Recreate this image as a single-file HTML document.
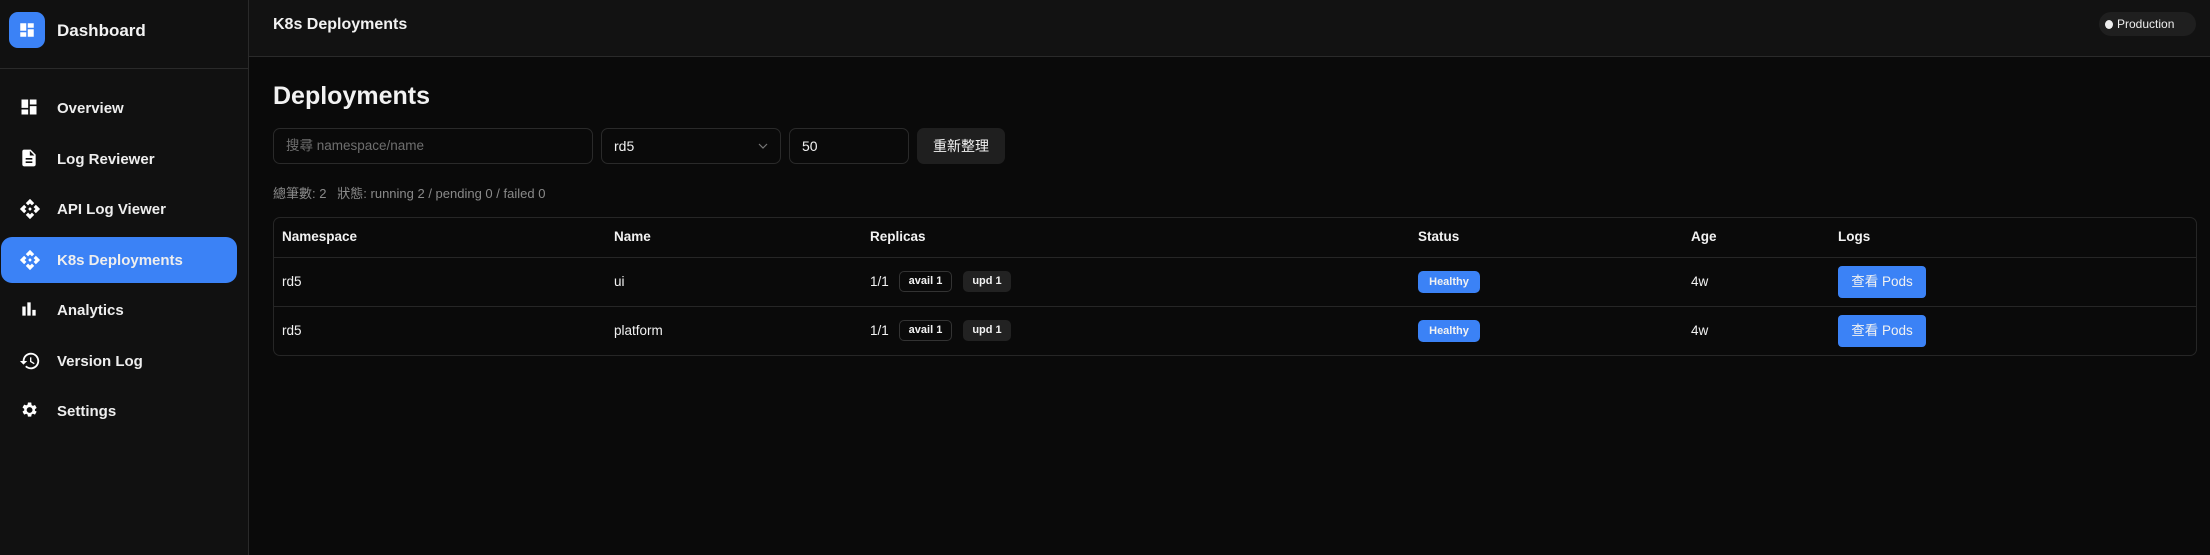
<!DOCTYPE html>
<html><head><meta charset="utf-8"><style>
*{box-sizing:border-box;margin:0;padding:0}
body{width:2210px;height:555px;background:#0a0a0a;font-family:"Liberation Sans","Noto Sans CJK TC",sans-serif;color:#f2f2f2;position:relative;overflow:hidden}
.a{position:absolute;white-space:nowrap}
#sb{position:absolute;left:0;top:0;width:249px;height:555px;background:#111;border-right:1px solid #2a2a2a}
#top{position:absolute;left:249px;top:0;right:0;height:57px;background:#121212;border-bottom:1px solid #2a2a2a}
.nav{position:absolute;left:0;width:236px;height:46px;font-size:15px;font-weight:bold;color:#eee}
.nav svg{position:absolute;left:19px;top:12px}
.nav span{position:absolute;left:57px;top:15px}
.in{position:absolute;top:128px;height:36px;border:1px solid #2a2a2a;border-radius:7px;background:#0a0a0a;font-size:14px;padding:0 12px;line-height:34px}
.th{font-size:13.5px;font-weight:bold;top:229px}
.td{font-size:13.5px}
.bd{position:absolute;height:21px;border-radius:5px;font-size:11px;font-weight:bold;line-height:19px;text-align:center}
</style></head><body>
<div id="sb">
 <div class="a" style="left:9px;top:12px;width:36px;height:36px;background:#3b82f6;border-radius:9px"></div>
 <svg class="a" style="left:18px;top:21px" width="18" height="18" viewBox="0 0 24 24" fill="#fff"><path d="M3 13h8V3H3zm0 8h8v-6H3zm10 0h8V11h-8zm0-18v6h8V3z"/></svg>
 <div class="a" style="left:57px;top:21px;font-size:17px;font-weight:bold">Dashboard</div>
 <div class="a" style="left:0;top:68px;width:248px;height:1px;background:#2a2a2a"></div>
 <div class="nav" style="top:85px"><svg width="20" height="20" viewBox="0 0 24 24" fill="#fff"><path d="M3 13h8V3H3zm0 8h8v-6H3zm10 0h8V11h-8zm0-18v6h8V3z"/></svg><span>Overview</span></div>
 <div class="nav" style="top:136px"><svg width="20" height="20" viewBox="0 0 24 24" fill="#fff"><path d="M14 2H6c-1.1 0-2 .9-2 2v16c0 1.1.9 2 2 2h12c1.1 0 2-.9 2-2V8zm2 16H8v-2h8zm0-4H8v-2h8zm-3-5V3.5L18.5 9z"/></svg><span>Log Reviewer</span></div>
 <div class="nav" style="top:186px"><svg width="22" height="22" viewBox="0 0 24 24" fill="#fff"><path d="M14 12l-2 2-2-2 2-2zm-2-6l2.1 2.1 2.5-2.5L12 1 7.4 5.6l2.5 2.5zm-6 6l2.1-2.1-2.5-2.5L1 12l4.6 4.6 2.5-2.5zm12 0l-2.1 2.1 2.5 2.5L23 12l-4.6-4.6-2.5 2.5zm-6 6l-2.1-2.1-2.5 2.5L12 23l4.6-4.6-2.5-2.5z"/></svg><span>API Log Viewer</span></div>
 <div class="nav" style="top:237px;left:1px;background:#3b82f6;border-radius:11px;height:46px"><svg width="22" height="22" viewBox="0 0 24 24" fill="#fff" style="left:18px"><path d="M14 12l-2 2-2-2 2-2zm-2-6l2.1 2.1 2.5-2.5L12 1 7.4 5.6l2.5 2.5zm-6 6l2.1-2.1-2.5-2.5L1 12l4.6 4.6 2.5-2.5zm12 0l-2.1 2.1 2.5 2.5L23 12l-4.6-4.6-2.5 2.5zm-6 6l-2.1-2.1-2.5 2.5L12 23l4.6-4.6-2.5-2.5z"/></svg><span style="left:56px">K8s Deployments</span></div>
 <div class="nav" style="top:287px"><svg width="20" height="20" viewBox="0 0 24 24" fill="#fff"><path d="M4 9h4v11H4zm12 4h4v7h-4zm-6-9h4v16h-4z"/></svg><span>Analytics</span></div>
 <div class="nav" style="top:338px"><svg width="22" height="22" viewBox="0 0 24 24" fill="#fff"><path d="M13 3a9 9 0 0 0-9 9H1l3.9 3.9L9 12H6a7 7 0 1 1 2.1 5l-1.4 1.4A9 9 0 1 0 13 3zm-1 5v5l4.3 2.5.7-1.2-3.5-2.1V8z"/></svg><span>Version Log</span></div>
 <div class="nav" style="top:388px"><svg width="20" height="20" viewBox="0 0 24 24" fill="#fff"><path d="M19.1 12.9a7 7 0 0 0 0-1.8l2.1-1.6-2-3.5-2.5 1a7 7 0 0 0-1.6-.9L14.7 3h-4l-.4 2.6a7 7 0 0 0-1.6.9l-2.5-1-2 3.5 2.1 1.6a7 7 0 0 0 0 1.8l-2.1 1.6 2 3.5 2.5-1a7 7 0 0 0 1.6.9l.4 2.6h4l.4-2.6a7 7 0 0 0 1.6-.9l2.5 1 2-3.5zM12.7 15.5a3.5 3.5 0 1 1 0-7 3.5 3.5 0 0 1 0 7z"/></svg><span>Settings</span></div>
</div>
<div id="top">
 <div class="a" style="left:24px;top:16px;font-size:16px;font-weight:bold">K8s Deployments</div>
 <div class="a" style="left:1850px;top:12px;width:97px;height:24px;background:#1f1f1f;border-radius:12px"></div>
 <div class="a" style="left:1856px;top:20px;width:8px;height:9px;background:#eee;border-radius:50%"></div>
 <div class="a" style="left:1868px;top:17px;font-size:12px;color:#eee">Production</div>
</div>
<div class="a" style="left:273px;top:82px;font-size:25px;font-weight:bold">Deployments</div>
<div class="in" style="left:273px;width:320px;color:#6f6f6f;font-size:13.5px">搜尋 namespace/name</div>
<div class="in" style="left:601px;width:180px">rd5<svg class="a" style="left:156px;top:14px" width="10" height="7" viewBox="0 0 10 7"><path d="M1 1l4 4 4-4" stroke="#777" fill="none" stroke-width="1.2"/></svg></div>
<div class="in" style="left:789px;width:120px">50</div>
<div class="a" style="left:917px;top:128px;width:88px;height:36px;background:#1f1f1f;border-radius:7px;font-size:14px;text-align:center;line-height:36px">重新整理</div>
<div class="a" style="left:273px;top:183px;font-size:13px;color:#8a8a8a">總筆數: 2 &nbsp; 狀態: running 2 / pending 0 / failed 0</div>
<div class="a" style="left:273px;top:217px;width:1924px;height:139px;border:1px solid #262626;border-radius:7px"></div>
<div class="a" style="left:274px;top:257px;width:1922px;height:1px;background:#262626"></div>
<div class="a" style="left:274px;top:306px;width:1922px;height:1px;background:#262626"></div>
<div class="a th" style="left:282px">Namespace</div>
<div class="a th" style="left:614px">Name</div>
<div class="a th" style="left:870px">Replicas</div>
<div class="a th" style="left:1418px">Status</div>
<div class="a th" style="left:1691px">Age</div>
<div class="a th" style="left:1838px">Logs</div>

<div class="a td" style="left:282px;top:274px">rd5</div>
<div class="a td" style="left:614px;top:274px">ui</div>
<div class="a td" style="left:870px;top:274px">1/1</div>
<div class="bd" style="left:899px;top:271px;border:1px solid #333;width:53px">avail 1</div>
<div class="bd" style="left:963px;top:271px;background:#222;width:48px;line-height:21px">upd 1</div>
<div class="bd" style="left:1418px;top:271px;background:#3b82f6;width:62px;height:22px;line-height:22px">Healthy</div>
<div class="a td" style="left:1691px;top:274px">4w</div>
<div class="a" style="left:1838px;top:266px;width:88px;height:32px;background:#3b82f6;border-radius:4px;font-size:13.5px;text-align:center;line-height:32px">查看 Pods</div>

<div class="a td" style="left:282px;top:323px">rd5</div>
<div class="a td" style="left:614px;top:323px">platform</div>
<div class="a td" style="left:870px;top:323px">1/1</div>
<div class="bd" style="left:899px;top:320px;border:1px solid #333;width:53px">avail 1</div>
<div class="bd" style="left:963px;top:320px;background:#222;width:48px;line-height:21px">upd 1</div>
<div class="bd" style="left:1418px;top:320px;background:#3b82f6;width:62px;height:22px;line-height:22px">Healthy</div>
<div class="a td" style="left:1691px;top:323px">4w</div>
<div class="a" style="left:1838px;top:315px;width:88px;height:32px;background:#3b82f6;border-radius:4px;font-size:13.5px;text-align:center;line-height:32px">查看 Pods</div>
</body></html>
